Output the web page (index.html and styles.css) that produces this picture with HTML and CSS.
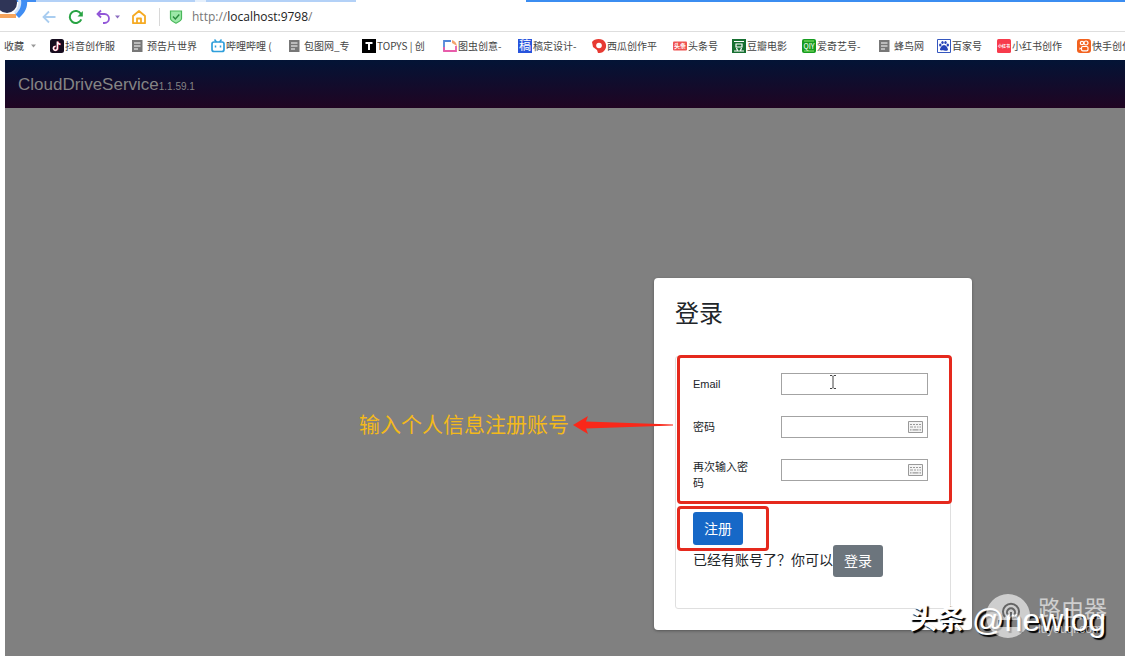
FILE: index.html
```html
<!DOCTYPE html>
<html lang="zh-CN">
<head>
<meta charset="utf-8">
<title>CloudDriveService</title>
<link rel="stylesheet" href="styles.css">
</head>
<body>
<div class="tabs"></div>
<svg class="avatar" viewBox="0 0 30 20" aria-hidden="true">
  <path d="M20 0h7c1 7-2 13-8 18l-4-4c4-4 6-9 5-14z" fill="#3f8df3"/>
  <path d="M18 0h3c1 5-1 10-5 14l-2-2c4-3 5-8 4-12z" fill="#cfe2fb"/>
  <circle cx="7" cy="3" r="10" fill="#2f3557"/>
  <path d="M0 14h16v4H0z" fill="#f6a45c"/>
</svg>
<div class="toolbar">
  <button class="tool" aria-label="后退"><svg viewBox="0 0 14 14"><path d="M13.500 7H1.500M7 1.500L1.500 7 7 12.500" fill="none" stroke="#a9cdf0" stroke-width="1.800"/></svg></button>
  <button class="tool" aria-label="刷新"><svg viewBox="0 0 14 14"><path d="M12.300 9.300A6 6 0 1 1 12 4" fill="none" stroke="#28a343" stroke-width="2"/><path d="M13.800 1v5.500H8.500z" fill="#28a343"/></svg></button>
  <button class="tool" aria-label="撤销"><svg viewBox="0 0 14 14"><path d="M1.500 4H8.500a4.500 4.500 0 0 1 0 9H7M5 0.500L1.500 4 5 7.500" fill="none" stroke="#9257d8" stroke-width="1.800"/></svg></button>
  <button class="more" aria-label="更多"><svg viewBox="0 0 5 4"><path d="M0 .5h5L2.500 3.500z" fill="#8b6cc0"/></svg></button>
  <button class="tool home" aria-label="主页"><svg viewBox="0 0 14 14"><path d="M1 6L7 1l6 5v7.200H1zM5 13V8.500h4V13" fill="none" stroke="#f5aa23" stroke-width="1.800" stroke-linejoin="round"/></svg></button>
  <span class="divider"></span>
  <svg class="shield" viewBox="0 0 14 14" aria-hidden="true"><path d="M1.500 1h11v7.500c0 2-3 3.500-5.500 4.700C4.500 12 1.500 10.500 1.500 8.500z" fill="#9ce8a8" stroke="#4ab75b" stroke-width="1.200"/><path d="M4 6.500L6.300 9 10.300 4.500" fill="none" stroke="#288a3c" stroke-width="1.400"/></svg>
  <span class="url"><span class="dim">http://</span>localhost:9798<span class="dim">/</span></span>
</div>
<nav class="bookmarks">
  <a class="fav" href="#">收藏<svg viewBox="0 0 5 4"><path d="M0 .5h5L2.500 3.500z" fill="#999"/></svg></a>
  <a href="#"><svg viewBox="0 0 14 14"><rect width="14" height="14" rx="2.500" fill="#160c1e"/><path d="M7.700 2.500v6.800A2 2 0 1 1 5.800 7.300M7.700 2.500c.3 1.700 1.300 2.600 3 2.800" fill="none" stroke="#ff5a7c" stroke-width="1.800"/><path d="M7.300 2.500v6.800A2 2 0 1 1 5.500 7.300M7.300 2.500c.3 1.700 1.300 2.600 3 2.800" fill="none" stroke="#fff" stroke-width="1.300"/></svg>抖音创作服</a>
  <a href="#"><svg viewBox="0 0 14 14"><path d="M0 1h10.500v12H0z" fill="#777"/><path d="M2 4h6.500M2 7h6.500M2 10h4" stroke="#fff"/></svg>预告片世界</a>
  <a href="#"><svg viewBox="0 0 14 14"><rect x="1" y="3" width="12" height="9.500" rx="2" fill="#fff" stroke="#2f9fdb" stroke-width="1.700"/><path d="M3.500.5L5.500 3M10.500.5L8.500 3M4.500 6.500v2M9.500 6.500v2" stroke="#2f9fdb" stroke-width="1.500"/></svg>哔哩哔哩 (</a>
  <a href="#"><svg viewBox="0 0 14 14"><path d="M0 1h10.500v12H0z" fill="#777"/><path d="M2 4h6.500M2 7h6.500M2 10h4" stroke="#fff"/></svg>包图网_专</a>
  <a href="#"><svg viewBox="0 0 14 14"><path d="M0 0h14v14H0z" fill="#000"/><path d="M3.500 4h7M7 4v7" stroke="#fff" stroke-width="2"/></svg>TOPYS | 创</a>
  <a href="#"><svg viewBox="0 0 14 14"><path d="M8 2H1v10" fill="none" stroke="#5186d8" stroke-width="1.800"/><path d="M1 8v4h12V7" fill="none" stroke="#e85caa" stroke-width="1.800"/><path d="M9 1c3 1 4.500 3 5 6L9 4z" fill="#f3a36f"/></svg>图虫创意-</a>
  <a href="#"><svg viewBox="0 0 14 14"><path d="M0 0h14v14H0z" fill="#2854dc"/><text x="1" y="11" font-size="12" fill="#fff">稿</text></svg>稿定设计-</a>
  <a href="#"><svg viewBox="0 0 14 14"><path d="M0 3C2 0 7-1 11 1c4 3 4 8 1 11-2 2-4 2-6 2L5 11 1 8z" fill="#e73a32"/><circle cx="7" cy="6.500" r="2.800" fill="#fff"/></svg>西瓜创作平</a>
  <a href="#"><svg viewBox="0 0 14 14"><rect y="2.500" width="14" height="9" rx="1" fill="#ef5350"/><text x="1" y="9.300" font-size="6" font-weight="bold" fill="#fff">头条</text></svg>头条号</a>
  <a href="#"><svg viewBox="0 0 14 14"><path d="M0 0h14v14H0z" fill="#176f31"/><path d="M2 2.500h10M4 5h6v3H4zM4.500 9l1 2.500M9.500 9l-1 2.500M2 12h10" fill="none" stroke="#fff" stroke-width="1.200"/></svg>豆瓣电影</a>
  <a href="#"><svg viewBox="0 0 14 14"><rect width="14" height="14" rx="2" fill="#169c20"/><path d="M2 2h10M2 12h10" stroke="#8ee56d"/><text x="1.500" y="9.500" font-size="7" fill="#fff">QIY</text></svg>爱奇艺号-</a>
  <a href="#"><svg viewBox="0 0 14 14"><path d="M0 1h10.500v12H0z" fill="#777"/><path d="M2 4h6.500M2 7h6.500M2 10h4" stroke="#fff"/></svg>蜂鸟网</a>
  <a href="#"><svg viewBox="0 0 14 14"><path d="M.5.500h13v13H.5z" fill="#fff" stroke="#3557bf"/><ellipse cx="3.300" cy="6" rx="1.200" ry="1.600" fill="#2744b8"/><ellipse cx="5.500" cy="3.500" rx="1.200" ry="1.600" fill="#2744b8"/><ellipse cx="8.500" cy="3.500" rx="1.200" ry="1.600" fill="#2744b8"/><ellipse cx="10.800" cy="6" rx="1.200" ry="1.600" fill="#2744b8"/><path d="M7 6c2 0 4 3 4 4.500S9 12 7 11.500 3 12 3 10.500 5 6 7 6z" fill="#2744b8"/></svg>百家号</a>
  <a href="#"><svg viewBox="0 0 14 14"><rect width="14" height="14" rx="1.500" fill="#f73b4c"/><text x="1" y="8.800" font-size="4" font-weight="bold" fill="#fff">小红书</text></svg>小红书创作</a>
  <a href="#"><svg viewBox="0 0 14 14"><rect width="14" height="14" rx="3" fill="#f2621f"/><circle cx="5" cy="4" r="1.700" fill="none" stroke="#fff" stroke-width="1.200"/><circle cx="9" cy="4" r="2" fill="none" stroke="#fff" stroke-width="1.200"/><rect x="4.500" y="7.500" width="6.500" height="4.300" rx="1.300" fill="none" stroke="#fff" stroke-width="1.200"/><path d="M2.500 8.500L4.500 9.500 2.500 11z" fill="#fff"/></svg>快手创作</a>
</nav>
<div class="page">
  <header class="appbar"><span class="brand">CloudDriveService</span><span class="version">1.1.59.1</span></header>
  <main class="stage">
    <section class="dialog">
      <h1>登录</h1>
      <form class="panel">
        <div class="row"><label for="email">Email</label><input id="email" type="text"></div>
        <div class="row"><label for="pass">密码</label><span class="secret"><input id="pass" type="password"><svg viewBox="0 0 15 12" aria-hidden="true"><path d="M.5.500h14v11H.5z" fill="#f4f4f4" stroke="#999"/><path d="M2 3.500h2M5 3.500h2M8 3.500h2M11 3.500h2M2 6h3M6 6h2M9 6h1.500M11.500 6H13M2 8.800h1.500M4.500 8.800h6M11.500 8.800H13" stroke="#999" stroke-width="1.200"/></svg></span></div>
        <div class="row tall"><label for="again">再次输入密码</label><span class="secret"><input id="again" type="password"><svg viewBox="0 0 15 12" aria-hidden="true"><path d="M.5.500h14v11H.5z" fill="#f4f4f4" stroke="#999"/><path d="M2 3.500h2M5 3.500h2M8 3.500h2M11 3.500h2M2 6h3M6 6h2M9 6h1.500M11.500 6H13M2 8.800h1.500M4.500 8.800h6M11.500 8.800H13" stroke="#999" stroke-width="1.200"/></svg></span></div>
        <button class="btn primary" type="button">注册</button>
        <div class="switch"><span>已经有账号了？你可以</span><button class="btn secondary" type="button">登录</button></div>
        <div class="mark fields"></div>
        <div class="mark submit"></div>
      </form>
      <svg class="cursor" viewBox="0 0 8 14" aria-hidden="true"><path d="M1 .5h2l1 1 1-1h2M4 1.500v11M1 13.500h2l1-1 1 1h2" fill="none" stroke="#444"/></svg>
      <div class="note"><span>输入个人信息注册账号</span><svg viewBox="0 0 101 18" aria-hidden="true"><path d="M0 9L15 0l-2 5.500L100 8.500v1L13 12.500l2 5.500z" fill="#f9281a"/></svg></div>
    </section>
  </main>
</div>
<div class="credit"><b>头条</b><span>@newlog</span></div>
<div class="sitemark">
  <svg viewBox="0 0 44 44" aria-hidden="true"><path fill-rule="evenodd" d="M22 0a22 22 0 1 1 0 44 22 22 0 0 1 0-44zM12 26v7h22v-7z" fill="#fff"/><g fill="none" stroke="#555" stroke-width="2"><path d="M19 23a8 8 0 1 1 12 0"/><path d="M22 21a4 4 0 1 1 6 0"/><path d="M25 18v8"/></g></svg>
  <div><strong>路由器</strong><span>luyouqi.com</span></div>
</div>
</body>
</html>
```
FILE: styles.css
```css
* { box-sizing: border-box; }
html, body { height: 100%; }
body {
  margin: 0;
  display: flex;
  flex-direction: column;
  overflow: hidden;
  position: relative;
  background: #fff;
  font-family: "Liberation Sans", "Noto Sans CJK SC", sans-serif;
}
button { border: 0; padding: 0; background: none; font-family: inherit; }
svg { display: block; flex: none; overflow: visible; }
.tabs {
  height: 2px;
  flex: none;
  background: linear-gradient(90deg, #3f8df3 36px, #b3d1f7 36px 195px, #e4effc 195px 206px, #b3d1f7 206px 356px, #fff 356px 526px, #3b8df1 526px);
}
.avatar { position: absolute; left: 0; top: 0; width: 30px; height: 20px; }
.toolbar {
  height: 30px;
  flex: none;
  display: flex;
  align-items: center;
  padding-left: 42px;
  border-bottom: 1px solid #dedede;
}
.tool { width: 14px; margin-right: 13px; }
.tool svg { width: 14px; height: 14px; }
.more { width: 5px; margin-left: -8px; margin-right: 12px; }
.more svg { width: 5px; height: 4px; }
.divider { width: 1px; height: 18px; background: #d8d8d8; margin-right: 9px; }
.shield { width: 14px; height: 14px; margin-right: 9px; }
.url { font: 12px/18px "Open Sans", sans-serif; color: #222; }
.dim { color: #777; }
.bookmarks {
  height: 28px;
  flex: none;
  display: grid;
  grid-template-columns: 46px 82px 79px 78px 73px 81px 75px 74px 81px 59px 70px 77px 58px 60px 80px 80px;
  align-items: center;
  padding-left: 4px;
  overflow: hidden;
}
.bookmarks a {
  display: flex;
  align-items: center;
  gap: 1px;
  white-space: nowrap;
  color: #444;
  text-decoration: none;
  font: 10px/16px "Noto Sans CJK SC", sans-serif;
}
.bookmarks svg { width: 14px; height: 14px; }
.bookmarks .fav { gap: 7px; }
.bookmarks .fav svg { width: 5px; height: 4px; }
.page {
  flex: 1;
  display: flex;
  flex-direction: column;
  margin-left: 5px;
  background: #808080;
}
.appbar {
  height: 48px;
  display: flex;
  align-items: baseline;
  padding: 15px 13px 13px;
  color: #858585;
  background: linear-gradient(180deg, #031436, #200422);
  line-height: 20px;
}
.brand { font-size: 17px; }
.version { font-size: 10px; }
.stage {
  flex: 1;
  display: flex;
  justify-content: flex-end;
  align-items: flex-start;
  padding: 170px 153px 0 0;
}
.dialog {
  position: relative;
  width: 318px;
  padding: 20px 21px 21px;
  border-radius: 4px;
  background: #fff;
  color: #212529;
  box-shadow: 0 1px 3px #555;
}
h1 { margin: 0 0 26px; font-size: 24px; line-height: 32px; font-weight: 400; }
.panel {
  position: relative;
  padding: 16px 22px 31px 17px;
  border: 1px solid #dfdfdf;
  border-radius: 3px;
}
.row {
  display: grid;
  grid-template-columns: 60px 1fr;
  column-gap: 28px;
  align-items: center;
  margin-bottom: 21px;
  font-size: 11px;
  line-height: 16px;
}
.tall { align-items: start; }
.row input {
  display: block;
  width: 100%;
  height: 22px;
  border: 1px solid #a3a3a3;
  background: #fff;
  outline: none;
}
.secret { position: relative; }
.secret svg { position: absolute; right: 5px; top: 5px; width: 15px; height: 12px; }
.btn {
  height: 32px;
  width: 50px;
  border-radius: 3px;
  color: #fff;
  font-size: 14px;
  line-height: 20px;
}
.primary { display: block; height: 33px; background: #1668c7; }
.secondary { background: #6c757d; }
.switch {
  display: flex;
  font-size: 14px;
  line-height: 30px;
  white-space: nowrap;
}
.mark { position: absolute; border: 3px solid #e5291d; border-radius: 4px; pointer-events: none; }
.fields { left: 1px; right: -2px; top: -2px; height: 149px; }
.submit { left: 1px; width: 92px; top: 149px; height: 45px; }
.cursor { position: absolute; left: 175px; top: 97px; width: 8px; height: 14px; }
.note {
  position: absolute;
  right: 298px;
  top: 132px;
  display: flex;
  align-items: center;
  gap: 4px;
  color: #f3b91b;
  font-size: 21px;
  line-height: 30px;
  white-space: nowrap;
}
.note svg { width: 101px; height: 18px; }
.sitemark {
  position: absolute;
  right: 18px;
  bottom: 18px;
  display: flex;
  align-items: center;
  gap: 8px;
  color: #fff;
  opacity: 0.62;
}
.sitemark > svg { width: 44px; height: 44px; }
.sitemark strong { display: block; font-size: 23px; line-height: 26px; font-weight: 400; }
.sitemark div > span { display: block; font-size: 12px; line-height: 14px; }
.credit {
  position: absolute;
  right: 19px;
  bottom: 18px;
  display: flex;
  align-items: center;
  gap: 7px;
  color: #fff;
  font-size: 32px;
  line-height: 36px;
  text-shadow: 2px 2px 1px #000;
}
.credit b { font-size: 28px; }
```
